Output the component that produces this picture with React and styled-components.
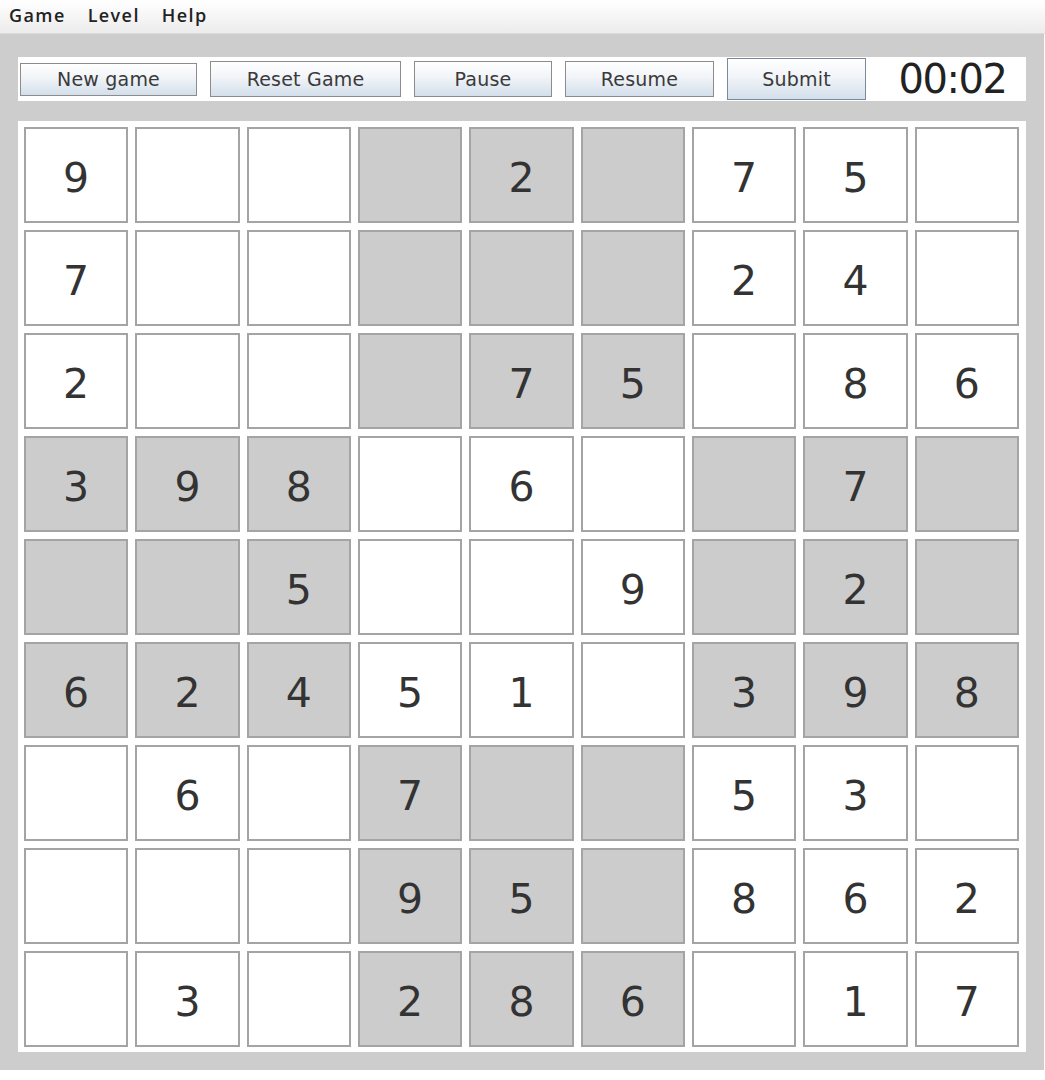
import React from 'react';
import styled, { createGlobalStyle } from 'styled-components';

const GlobalStyle = createGlobalStyle`
    body {
        margin: 0;
        background: #ffffff;
        font-family: "DejaVu Sans", Verdana, sans-serif;
    }
`

// 0 = empty cell
const puzzle = [
    [9, 0, 0, 0, 2, 0, 7, 5, 0],
    [7, 0, 0, 0, 0, 0, 2, 4, 0],
    [2, 0, 0, 0, 7, 5, 0, 8, 6],
    [3, 9, 8, 0, 6, 0, 0, 7, 0],
    [0, 0, 5, 0, 0, 9, 0, 2, 0],
    [6, 2, 4, 5, 1, 0, 3, 9, 8],
    [0, 6, 0, 7, 0, 0, 5, 3, 0],
    [0, 0, 0, 9, 5, 0, 8, 6, 2],
    [0, 3, 0, 2, 8, 6, 0, 1, 7]
]

const buttons = [
    { label: 'New game', width: 177, height: 33 },
    { label: 'Reset Game', width: 191, height: 36 },
    { label: 'Pause', width: 138, height: 36 },
    { label: 'Resume', width: 149, height: 36 },
    { label: 'Submit', width: 139, height: 42, focused: true }
]

// boxes off the diagonal pattern are shaded
const isShaded = (r, c) => {
    const br = Math.floor(r / 3);
    const bc = Math.floor(c / 3);
    return (br + bc) % 2 === 1;
}

const App = () => {
    return (
        <>
            <GlobalStyle />
            <MenuBar>
                <MenuItem>Game</MenuItem>
                <MenuItem>Level</MenuItem>
                <MenuItem>Help</MenuItem>
            </MenuBar>
            <Frame>
                <Toolbar>
                    {buttons.map(b => (
                        <Button key={b.label} w={b.width} h={b.height} focused={b.focused}>
                            {b.label}
                        </Button>
                    ))}
                    <Timer>00:02</Timer>
                </Toolbar>
                <Board>
                    {puzzle.map((row, r) =>
                        row.map((value, c) => (
                            <Cell key={`${r}-${c}`} shaded={isShaded(r, c)}>
                                {value || ''}
                            </Cell>
                        ))
                    )}
                </Board>
            </Frame>
        </>
    )
}

const MenuBar = styled.div`
    display: flex;
    align-items: center;
    gap: 22px;
    height: 33px;
    padding: 0 0 0 9px;
    background: linear-gradient(#ffffff, #ececec);
    border-bottom: 1px solid #dadada;
`

const MenuItem = styled.span`
    font-family: "Open Sans", sans-serif;
    font-weight: 600;
    font-size: 18px;
    letter-spacing: 1.4px;
    color: #222222;
    margin-top: -4px;
`

const Frame = styled.div`
    width: 1008px;
    margin-right: 5px;
    padding: 23px 18px 18px 18px;
    background: #cdcdcd;
    display: flex;
    flex-direction: column;
    gap: 20px;
`

const Toolbar = styled.div`
    display: flex;
    align-items: center;
    gap: 13px;
    height: 44px;
    padding-left: 2px;
    background: #ffffff;
`

const Button = styled.div`
    box-sizing: border-box;
    width: ${p => p.w}px;
    height: ${p => p.h}px;
    display: flex;
    align-items: center;
    justify-content: center;
    border: 1px solid ${p => p.focused ? '#7a8a9a' : '#8c8c8c'};
    background: linear-gradient(#ffffff 0%, #f1f4f8 45%, #d3dfeb 100%);
    font-family: "DejaVu Sans", sans-serif;
    font-size: 19px;
    color: #3a3a3a;
    letter-spacing: 0.2px;
`

const Timer = styled.div`
    flex: 1;
    text-align: center;
    font-family: "DejaVu Sans", sans-serif;
    font-size: 40px;
    color: #222222;
    letter-spacing: -1.5px;
`

const Board = styled.div`
    display: grid;
    grid-template-columns: repeat(9, 1fr);
    grid-auto-rows: 96px;
    gap: 7px 7px;
    padding: 6px 7px 5px 6px;
    background: #ffffff;
`

const Cell = styled.div`
    box-sizing: border-box;
    display: flex;
    align-items: center;
    justify-content: center;
    padding-top: 6px;
    border: 2px solid #a4a4a4;
    background: ${p => p.shaded ? '#cccccc' : '#ffffff'};
    font-family: "DejaVu Sans", sans-serif;
    font-size: 41px;
    color: #333333;
`

export default App;
